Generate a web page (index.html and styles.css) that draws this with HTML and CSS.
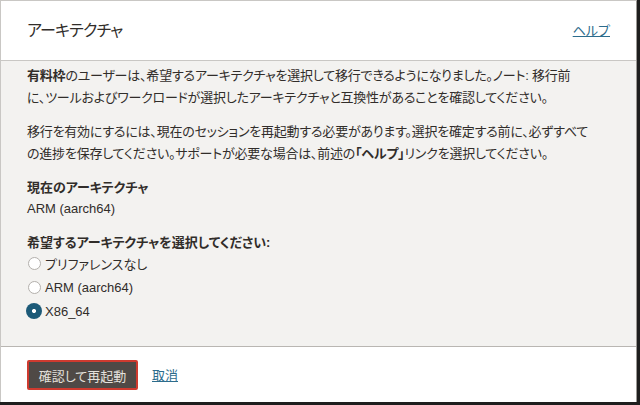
FILE: index.html
```html
<!DOCTYPE html>
<html lang="ja">
<head>
<meta charset="utf-8">
<link rel="stylesheet" href="styles.css">
</head>
<body>
<div class="dialog">
  <header class="dlg-header">
    <h1 class="dlg-title">アーキテクチャ</h1>
    <a class="link help" href="#">ヘルプ</a>
  </header>
  <main class="dlg-body">
    <p class="para"><b>有料枠</b>のユーザーは、希望するアーキテクチャを選択して移行できるようになりました。ノート: 移行前<br>に、ツールおよびワークロードが選択したアーキテクチャと互換性があることを確認してください。</p>
    <p class="para">移行を有効にするには、現在のセッションを再起動する必要があります。選択を確定する前に、必ずすべて<br>の進捗を保存してください。サポートが必要な場合は、前述の<b>「ヘルプ」</b>リンクを選択してください。</p>
    <div class="field">
      <div class="label">現在のアーキテクチャ</div>
      <div class="value">ARM (aarch64)</div>
    </div>
    <div class="field">
      <div class="label">希望するアーキテクチャを選択してください:</div>
      <div class="radios">
        <div class="radio"><span class="dot"></span><span>プリファレンスなし</span></div>
        <div class="radio"><span class="dot"></span><span>ARM (aarch64)</span></div>
        <div class="radio checked"><span class="dot"></span><span>X86_64</span></div>
      </div>
    </div>
  </main>
  <footer class="dlg-footer">
    <button class="btn-primary">確認して再起動</button>
    <a class="link cancel" href="#">取消</a>
  </footer>
</div>
</body>
</html>
```

FILE: styles.css
```css
html, body {
  margin: 0;
  padding: 0;
  background: #1e1e1e;
}
body {
  width: 640px;
  height: 405px;
  overflow: hidden;
  font-family: "Liberation Sans", "Noto Sans CJK JP", sans-serif;
  font-feature-settings: "palt";
  color: #312d2a;
}
.dialog {
  width: 635px;
  height: 401px;
  border-top: 1px solid #c9c7c4;
  border-left: 1px solid #c9c7c4;
  border-right: 1px solid #9b9894;
  background: #fff;
  display: flex;
  flex-direction: column;
}
.dlg-header {
  height: 59px;
  border-bottom: 1px solid #c9c7c4;
  display: flex;
  align-items: center;
  justify-content: space-between;
  padding: 0 26px 0 26px;
}
.dlg-title {
  margin: 0 0 3px 0;
  font-size: 16px;
  letter-spacing: -0.8px;
  font-weight: normal;
  color: #312d2a;
}
.link {
  color: #2c6c8c;
  text-decoration: underline;
  font-size: 13px;
}
.help {
  margin-bottom: 2px;
}
.dlg-body {
  flex: 1;
  background: #f3f2f0;
  border-bottom: 1px solid #b9b6b2;
  padding: 4px 26px 0 26px;
  font-size: 13px;
}
.para {
  margin: 0 0 12px 0;
  line-height: 22px;
  white-space: nowrap;
  letter-spacing: -0.22px;
}
.para b {
  font-weight: bold;
}
.field {
  margin-top: 2px;
  margin-bottom: 13px;
}
.label {
  font-weight: bold;
  line-height: 21px;
}
.value {
  line-height: 21px;
}
.radios {
  display: flex;
  flex-direction: column;
  margin-top: -2px;
}
.radio {
  display: flex;
  align-items: center;
  height: 24px;
  gap: 4px;
}
.dot {
  box-sizing: border-box;
  width: 13px;
  height: 13px;
  border-radius: 50%;
  border: 1px solid #b3b0ac;
  background: #fff;
  flex: none;
  margin-left: 1px;
}
.radio.checked .dot {
  width: 16px;
  height: 16px;
  margin-left: -1px;
  margin-right: -1px;
  border: none;
  background: radial-gradient(circle, #fff 0 1.8px, #1c5a78 2.3px);
}
.dlg-footer {
  height: 55px;
  display: flex;
  align-items: center;
  gap: 14px;
  padding: 0 26px;
}
.btn-primary {
  box-sizing: border-box;
  width: 111px;
  height: 30px;
  background: #4f4946;
  color: #e4e1dd;
  border: 2px solid #cf3a2f;
  border-radius: 2px;
  font-family: "Liberation Sans", "Noto Sans CJK JP", sans-serif;
  font-feature-settings: "palt";
  font-size: 13px;
  padding: 0;
  margin-top: 1px;
}
```
